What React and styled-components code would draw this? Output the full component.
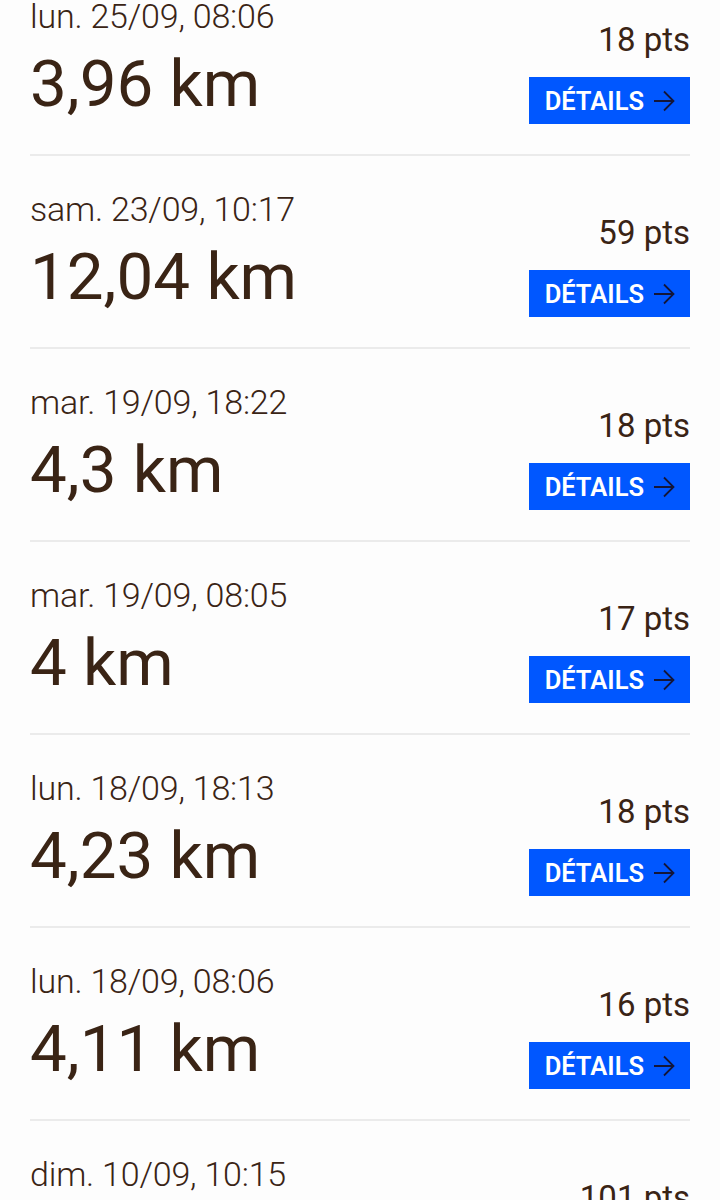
import React from "react";
import styled, { createGlobalStyle } from "styled-components";

const GlobalStyle = createGlobalStyle`
	html, body {
		margin: 0;
		padding: 0;
		background: #fdfdfd;
	}
	body {
		font-family: Roboto, "Noto Sans", "Liberation Sans", sans-serif;
		color: #3a2415;
	}
`;

const List = styled.ul`
	list-style: none;
	margin: -37px 30px 0;
	padding: 0;
`;

const Row = styled.li`
	display: flex;
	justify-content: space-between;
	height: 191px;
	border-bottom: 2px solid #ebebeb;
`;

const Left = styled.div`
	display: flex;
	flex-direction: column;
	padding-top: 33px;
`;

const Date = styled.span`
	font-size: 34px;
	font-weight: 300;
	line-height: 40px;
	letter-spacing: -0.2px;
`;

const Distance = styled.span`
	margin-top: 12px;
	font-size: 65.5px;
	font-weight: 400;
	line-height: 72px;
`;

const Right = styled.div`
	display: flex;
	flex-direction: column;
	align-items: flex-end;
	padding-top: 57px;
`;

const Points = styled.span`
	font-size: 33px;
	line-height: 40px;
`;

const DetailsButton = styled.button`
	display: flex;
	align-items: center;
	gap: 9px;
	height: 47px;
	margin-top: 17px;
	padding: 0 15px 0 16px;
	border: none;
	border-radius: 0;
	background: #0057ff;
	color: #ffffff;
	font-family: inherit;
	font-size: 25.5px;
	font-weight: 600;
	text-transform: uppercase;
	cursor: pointer;

	svg {
		flex: none;
	}
`;

const Arrow = () => (
	<svg width="22" height="22" viewBox="0 0 22 22" fill="none">
		<path
			d="M1 11h19.5M11 1.5 20.5 11 11 20.5"
			stroke="#141638"
			strokeWidth="1.8"
		/>
	</svg>
);

const runs = [
	{ date: "lun. 25/09, 08:06", km: "3,96", pts: 18 },
	{ date: "sam. 23/09, 10:17", km: "12,04", pts: 59 },
	{ date: "mar. 19/09, 18:22", km: "4,3", pts: 18 },
	{ date: "mar. 19/09, 08:05", km: "4", pts: 17 },
	{ date: "lun. 18/09, 18:13", km: "4,23", pts: 18 },
	{ date: "lun. 18/09, 08:06", km: "4,11", pts: 16 },
	{ date: "dim. 10/09, 10:15", km: "21,1", pts: 101 },
];

const App = () => {
	return (
		<>
			<GlobalStyle />
			<List>
				{runs.map((run) => (
					<Row key={run.date}>
						<Left>
							<Date>{run.date}</Date>
							<Distance>{run.km} km</Distance>
						</Left>
						<Right>
							<Points>{run.pts} pts</Points>
							<DetailsButton>
								Détails
								<Arrow />
							</DetailsButton>
						</Right>
					</Row>
				))}
			</List>
		</>
	);
};

export default App;
